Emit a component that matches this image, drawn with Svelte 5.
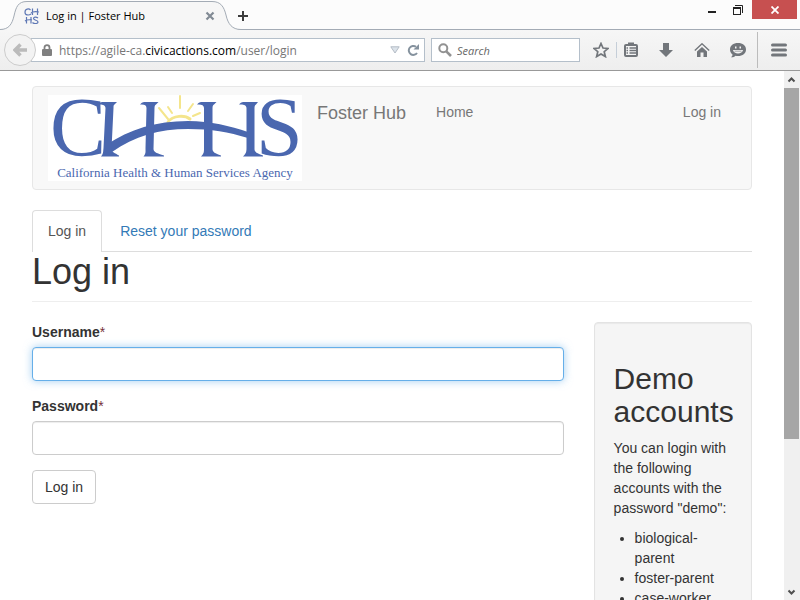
<script>
  const accounts = ['biological-parent', 'foster-parent', 'case-worker'];
  const rays = [
    [132, 13, 132, 1],
    [124, 18, 120, 12],
    [120, 24, 111, 13],
    [140, 16, 145, 9],
    [145, 21, 152, 18]
  ];
  let username = $state('');
  let password = $state('');
  let search = $state('');
</script>

<div class="window">
  <header class="titlebar">
    <div class="tab">
      <svg class="tab-shape" width="250" height="30" viewBox="0 0 250 30" aria-hidden="true">
        <path d="M0 29.500C9 29.500 12 24 14 16C16 7 18 1.500 27 1.500H212C221 1.500 224 7 226 15C228 24 232 29.500 241 29.500H250V30H0Z" fill="#f6f6f6" />
        <path d="M0 29.500C9 29.500 12 24 14 16C16 7 18 1.500 27 1.500H212C221 1.500 224 7 226 15C228 24 232 29.500 241 29.500H250" fill="none" stroke="#a3abb5" />
      </svg>
      <div class="tab-content">
        <svg width="16" height="16" viewBox="0 0 16 16" fill="none" stroke="#5f78b5" stroke-width="1.200" aria-hidden="true">
          <path d="M6.500 2C5 .3 1 .5 1 4.200C1 7.500 5 7.500 7 6M8.500 .5V7M13.500 .5V7M7 5C9 3.300 12 3.300 15 4M2.500 9V15.500M7 9V15.500M1 13C3 11.500 5 11.500 8 12M14 10C12 8.500 9.500 9 9.500 10.500C9.500 12.500 14 12 14 14C14 16 10 16 8.500 14.500" />
        </svg>
        <span class="tab-title">Log in | Foster Hub</span>
        <button class="plain" aria-label="Close tab">
          <svg width="10" height="10" viewBox="0 0 10 10"><path d="M1.500 1.500L8.500 8.500M8.500 1.500L1.500 8.500" stroke="#818a94" stroke-width="2.200" /></svg>
        </button>
      </div>
    </div>
    <button class="plain new-tab" aria-label="New tab">
      <svg width="12" height="12" viewBox="0 0 12 12"><path d="M6 1V11M1 6H11" stroke="#3d3d3d" stroke-width="2" /></svg>
    </button>
    <div class="controls">
      <button class="plain" aria-label="Minimize">
        <svg width="8" height="12" viewBox="0 0 8 12"><path d="M0 8H8" stroke="#222" stroke-width="2" /></svg>
      </button>
      <button class="plain" aria-label="Restore">
        <svg width="10" height="10" viewBox="0 0 10 10" fill="none" stroke="#222"><path d="M2 .5H9.500V8" /><rect x=".5" y="2.500" width="7" height="7" /><path d="M0 3H8" stroke-width="2" /></svg>
      </button>
      <button class="plain close" aria-label="Close">
        <svg width="8" height="8" viewBox="0 0 8 8"><path d="M.5 .5L7.500 7.500M7.500 .5L.5 7.500" stroke="#fff" stroke-width="1.800" /></svg>
      </button>
    </div>
  </header>

  <div class="toolbar">
    <button class="plain back" aria-label="Back">
      <svg width="14" height="14" viewBox="0 0 14 14"><path d="M7.500 1.500L2 7L7.500 12.500M2.500 7H14" fill="none" stroke="#bbb" stroke-width="3.500" /></svg>
    </button>
    <div class="address">
      <svg width="10" height="12" viewBox="0 0 10 12" aria-hidden="true"><path d="M2.500 6V3.500C2.500 .2 7.500 .2 7.500 3.500V6" fill="none" stroke="#808080" stroke-width="1.800" /><rect y="5" width="10" height="7" rx="1" fill="#808080" /></svg>
      <div class="url" role="textbox" aria-label="Address" tabindex="0">https://agile-ca.<b>civicactions.com</b>/user/login</div>
      <button class="plain" aria-label="Show history">
        <svg width="10" height="8" viewBox="0 0 10 8"><path d="M.8 .8H9.200L5 7Z" fill="#dce3ea" stroke="#b4bcc5" /></svg>
      </button>
      <button class="plain" aria-label="Reload">
        <svg width="12" height="12" viewBox="0 0 12 12"><path d="M10 9A4.500 4.500 0 1 1 9 2.800" fill="none" stroke="#85929e" stroke-width="2" /><path d="M12 0V5.500H6.500Z" fill="#85929e" /></svg>
      </button>
    </div>
    <label class="search">
      <svg width="14" height="14" viewBox="0 0 14 14" aria-hidden="true"><circle cx="5.300" cy="5.300" r="4" fill="none" stroke="#929292" stroke-width="2" /><path d="M8.300 8.300L13 13" stroke="#929292" stroke-width="2.600" /></svg>
      <input type="search" placeholder="Search" aria-label="Search" bind:value={search} />
    </label>
    <nav class="tools" aria-label="Browser tools">
      <button class="plain" aria-label="Bookmark this page">
        <svg width="16" height="16" viewBox="0 0 16 16"><path d="M8 1.500L10 6L15 6.400L11.200 9.700L12.400 14.600L8 12L3.600 14.600L4.800 9.700L1 6.400L6 6Z" fill="none" stroke="#72767b" stroke-width="1.700" /></svg>
      </button>
      <button class="plain list" aria-label="Show bookmarks">
        <svg width="14" height="16" viewBox="0 0 14 16"><path d="M5 3V1.500H9V3" fill="#72767b" stroke="#72767b" stroke-width="2" /><rect x="1" y="3" width="12" height="11" rx="1" fill="#f4f4f4" stroke="#72767b" stroke-width="2" /><path d="M2.500 6H4M5.500 6H12M2.500 8.500H4M5.500 8.500H12M2.500 11H4M5.500 11H12" stroke="#72767b" stroke-width="1.300" /></svg>
      </button>
      <button class="plain" aria-label="Downloads">
        <svg width="14" height="14" viewBox="0 0 14 14" fill="#72767b"><path d="M4 0H10V7H14L7 14L0 7H4Z" /></svg>
      </button>
      <button class="plain" aria-label="Home">
        <svg width="16" height="14" viewBox="0 0 16 14" fill="#72767b"><path d="M8 4L13 8.500V14H9.500V9.500H6.500V14H3V8.500Z" /><path d="M.8 7.500L8 .8L15.200 7.500" fill="none" stroke="#72767b" stroke-width="1.400" /></svg>
      </button>
      <button class="plain" aria-label="Start a conversation">
        <svg width="16" height="16" viewBox="0 0 16 16"><path d="M8 1C12.700 1 16 3.500 16 7.500S12.700 14 8 14C7 14 6.200 13.900 5.500 13.700C4.300 14.800 3 15.300 1 15.200C2.200 14.400 2.500 13.500 2.500 12.500C.9 11.300 0 9.700 0 7.500C0 3.500 3.300 1 8 1Z" fill="#72767b" /><path d="M5 5.500H6.500M9.500 5.500H11" stroke="#f4f4f4" stroke-width="2" /><path d="M3 8H13C12.500 12.500 3.500 12.500 3 8Z" fill="#f4f4f4" /><path d="M4.500 9.200H11.500" stroke="#72767b" stroke-width=".6" /></svg>
      </button>
    </nav>
    <button class="plain menu" aria-label="Open menu">
      <svg width="16" height="14" viewBox="0 0 16 14"><path d="M1.500 2H14.500M1.500 7H14.500M1.500 12H14.500" stroke="#72767b" stroke-width="3" stroke-linecap="round" /></svg>
    </button>
  </div>

  <div class="viewport">
    <main>
      <nav class="navbar">
        <a href="#home" class="logo" aria-label="CHHS home">
          <svg width="254" height="86" viewBox="0 0 254 86">
            <rect width="254" height="86" fill="#fff" />
            <g stroke="#f4e58c" stroke-width="2" fill="none" stroke-linecap="round">
              {#each rays as [x1, y1, x2, y2]}
                <line {x1} {y1} {x2} {y2} />
              {/each}
              <path d="M120 27C125 20 137 20 142 24" stroke-width="3" />
            </g>
            <g fill="#4a67af">
              <path d="M58 50C82 34 108 26 140 26C163 26 182 31 200 37V43C180 37 164 34 140 34C112 34 86 41 64 57Z" />
              <path d="M50 9.500C52 7 54 7 56 7H69L66.500 9.500C65.500 10 65.500 11 65.500 13L63.500 54C63.500 57 67 58 71 60.500V61.500H53C55.500 58.500 55 57 55.500 53L57.500 13C57.500 10 54 9 50 9.500Z" />
              <path d="M92 9.500C94 7 96 7 98 7H110.500L108 9.500C107 10 106.500 11 106.500 13L105.500 54C105.500 57 109 58.500 116 60.500V61.500H95.500C98 58.500 97.500 57 97.500 53L98.500 13C98.500 10 96 9 92 9.500Z" />
              <path d="M149 9.500C151 7 153 7 155 7H168.500L166 9.500C165 10 164.500 11 164.500 13V54C164.500 57 167 58.500 173 60.500V61.500H153C156 58.500 156 57 156 53V13C156 10 153 9 149 9.500Z" />
              <path d="M191 9.500C193 7 195 7 197 7H210L208 9.500C207 10 206.500 11 206.500 13V54C206.500 57 209 58.500 215 60.500V61.500H195C198 58.500 198.500 57 198.500 53V13C198.500 10 195 9 191 9.500Z" />
            </g>
            <g class="logo-text">
              <text x="2" y="61" font-size="84">C</text>
              <text x="208" y="61" font-size="84">S</text>
              <text x="127" y="82" font-size="13" text-anchor="middle">California Health &amp; Human Services Agency</text>
            </g>
          </svg>
        </a>
        <a href="#home" class="brand">Foster Hub</a>
        <a href="#home" class="nav-link">Home</a>
        <a href="#login" class="nav-link account">Log in</a>
      </nav>

      <nav class="tabs" aria-label="Account">
        <a href="#login" class="active" aria-current="page">Log in</a>
        <a href="#password">Reset your password</a>
      </nav>

      <h1>Log in</h1>

      <div class="columns">
        <form onsubmit={(e) => e.preventDefault()}>
          <label for="username">Username<span>*</span></label>
          <input id="username" class="focused" type="text" bind:value={username} />
          <label for="password">Password<span>*</span></label>
          <input id="password" type="password" bind:value={password} />
          <button class="submit" type="submit">Log in</button>
        </form>
        <aside>
          <h2>Demo accounts</h2>
          <p>You can login with the following accounts with the password "demo":</p>
          <ul>
            {#each accounts as account}
              <li>{account}</li>
            {/each}
          </ul>
        </aside>
      </div>
    </main>
    <div class="scrollbar" aria-hidden="true">
      <svg width="16" height="17" viewBox="0 0 16 17"><path d="M4.500 10.500L7.500 7.500L10.500 10.500" fill="none" stroke="#505050" stroke-width="2" /></svg>
      <div class="track"><div class="thumb"></div></div>
      <svg width="16" height="17" viewBox="0 0 16 17"><path d="M4.500 7.500L7.500 10.500L10.500 7.500" fill="none" stroke="#505050" stroke-width="2" /></svg>
    </div>
  </div>
</div>

<style>
  :global(body) {
    margin: 0;
    background: #fff;
  }
  .window, .window * {
    box-sizing: border-box;
  }
  .window {
    height: 100vh;
    display: flex;
    flex-direction: column;
    overflow: hidden;
    font: 14px/20px "Liberation Sans", Arial, sans-serif;
    color: #333;
  }
  svg {
    display: block;
    flex: none;
  }
  a {
    text-decoration: none;
  }
  .plain {
    border: 0;
    padding: 0;
    background: none;
    display: flex;
    align-items: center;
    justify-content: center;
    flex: none;
  }
  .titlebar {
    height: 30px;
    flex: none;
    display: flex;
    background: #fcfcfc;
    border-bottom: 1px solid #a3abb5;
  }
  .tab {
    width: 236px;
    height: 30px;
    position: relative;
    flex: none;
  }
  .tab-shape {
    position: absolute;
    top: 0;
    left: 0;
  }
  .tab-content {
    position: relative;
    display: flex;
    align-items: center;
    height: 32px;
    gap: 6px;
    padding: 0 21px 0 24px;
    font: 11px/16px "Open Sans", "Noto Sans", sans-serif;
    color: #000;
  }
  .tab-title {
    flex: 1;
    white-space: nowrap;
  }
  .new-tab {
    width: 14px;
    height: 32px;
    position: relative;
  }
  .controls {
    margin-left: auto;
    display: flex;
    align-items: flex-start;
  }
  .controls .plain {
    width: 26px;
    height: 19px;
  }
  .controls .close {
    width: 45px;
    background: #c75050;
    margin-left: 1px;
    margin-right: 3px;
  }
  .toolbar {
    height: 41px;
    flex: none;
    display: flex;
    align-items: center;
    background: linear-gradient(#f6f6f6, #eee);
    border-bottom: 1px solid #999;
    padding-left: 4px;
  }
  .back {
    width: 32px;
    height: 32px;
    border: 1px solid #ccc;
    border-radius: 50%;
    background: #f3f3f3;
    position: relative;
  }
  .address, .search {
    height: 24px;
    display: flex;
    align-items: center;
    border: 1px solid #b4bfca;
    background: #fff;
    font: 12px/16px "Open Sans", "Noto Sans", sans-serif;
  }
  .address {
    flex: 1;
    margin-left: -5px;
    padding: 0 5px 0 10px;
    gap: 7px;
  }
  .url {
    flex: 1;
    padding-top: 2px;
    color: #777;
    white-space: nowrap;
  }
  .url b {
    font-weight: 400;
    color: #000;
  }
  .search {
    width: 149px;
    margin-left: 6px;
    padding: 0 6px;
    gap: 5px;
  }
  .search input {
    min-width: 0;
    flex: 1;
    border: 0;
    padding: 2px 0 0;
    outline: 0;
    background: none;
    font: inherit;
    font-size: 11px;
    font-style: italic;
  }
  .search input::placeholder {
    color: #666;
  }
  .tools {
    display: flex;
    align-items: center;
    padding: 0 11px 0 13px;
  }
  .tools .plain {
    width: 16px;
    height: 16px;
    margin-right: 20px;
  }
  .tools .plain:first-child {
    margin-right: 7px;
  }
  .tools .plain:last-child {
    margin-right: 0;
  }
  .tools .list {
    width: 22px;
    padding-left: 6px;
    border-left: 1px solid #c5ced8;
  }
  .menu {
    width: 43px;
    height: 36px;
    border-left: 1px solid #bcbcbc;
  }
  .viewport {
    flex: 1;
    min-height: 0;
    display: flex;
  }
  main {
    flex: 1;
    min-width: 0;
    overflow: hidden;
    padding: 15px 32px;
  }
  .navbar {
    display: flex;
    align-items: flex-start;
    padding: 8px 15px;
    background: #f8f8f8;
    border: 1px solid #e7e7e7;
    border-radius: 4px;
    margin-bottom: 20px;
  }
  .navbar a {
    color: #777;
  }
  .logo-text {
    font-family: "Liberation Serif", serif;
    fill: #4a67af;
  }
  .brand {
    font-size: 18px;
    margin: 8px 15px 0;
  }
  .nav-link {
    margin: 7px 15px 0;
  }
  .account {
    margin-left: auto;
  }
  .tabs {
    display: flex;
    gap: 2px;
    border-bottom: 1px solid #ddd;
  }
  .tabs a {
    padding: 10px 15px;
    border: 1px solid transparent;
    border-bottom: 0;
    border-radius: 4px 4px 0 0;
    color: #337ab7;
  }
  .tabs .active {
    color: #555;
    background: #fff;
    border-color: #ddd;
    margin-bottom: -1px;
  }
  h1, h2 {
    font-weight: 400;
    margin: 0;
  }
  h1 {
    font-size: 36px;
    line-height: 40px;
    padding-bottom: 9px;
    border-bottom: 1px solid #eee;
  }
  .columns {
    display: flex;
    align-items: flex-start;
    gap: 30px;
    margin-top: 20px;
  }
  form {
    flex: 1;
  }
  form label {
    display: block;
    font-weight: 700;
    margin-bottom: 5px;
  }
  form label span {
    font-weight: 400;
    color: #77303a;
  }
  form input {
    display: block;
    width: 100%;
    height: 34px;
    padding: 6px 12px;
    font: inherit;
    border: 1px solid #ccc;
    border-radius: 4px;
    background: #fff;
    margin-bottom: 15px;
    box-shadow: inset 0 1px 1px rgba(0, 0, 0, 0.075);
  }
  form .focused {
    border-color: #66afe9;
    outline: 0;
    box-shadow: inset 0 1px 1px rgba(0, 0, 0, 0.075), 0 0 8px rgba(102, 175, 233, 0.6);
  }
  .submit {
    height: 34px;
    padding: 6px 12px;
    font: inherit;
    color: #333;
    border: 1px solid #ccc;
    border-radius: 4px;
    background: #fff;
  }
  aside {
    width: 22%;
    min-width: 158px;
    padding: 39px 18px 19px 19px;
    background: #f5f5f5;
    border: 1px solid #e3e3e3;
    border-radius: 4px;
    box-shadow: inset 0 1px 1px rgba(0, 0, 0, 0.05);
  }
  h2 {
    font-size: 30px;
    line-height: 33px;
  }
  aside p {
    margin: 10px 0;
  }
  ul {
    margin: 0;
    padding-left: 21px;
  }
  .scrollbar {
    width: 16px;
    display: flex;
    flex-direction: column;
    background: #f0f0f0;
  }
  .track {
    flex: 1;
    padding-right: 1px;
  }
  .thumb {
    height: 71%;
    background: #a6a6a6;
  }
</style>
